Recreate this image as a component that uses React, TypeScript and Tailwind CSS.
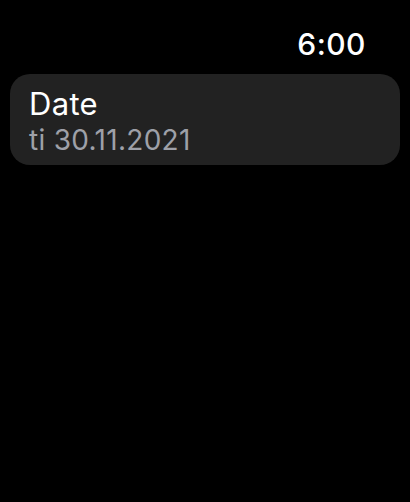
export default function App() {
  return (
    <div className="w-[410px] h-[502px] bg-black overflow-hidden font-['Inter',sans-serif] text-white">
      {/* Status bar */}
      <div className="flex justify-end pr-[44px] pt-[24px] h-[74px]">
        <span className="text-[30px] leading-[40px] font-medium tracking-[0.5px]">6:00</span>
      </div>

      {/* Date row */}
      <div className="mx-[10px] h-[91px] rounded-[20px] bg-[#222222] px-[19px] pt-[12px]">
        <div className="text-[31px] leading-[36px] text-white tracking-[0.3px]">Date</div>
        <div className="text-[28px] leading-[36px] text-[#9ea0a8] tracking-[0.3px]">ti 30.11.2021</div>
      </div>
    </div>
  );
}
